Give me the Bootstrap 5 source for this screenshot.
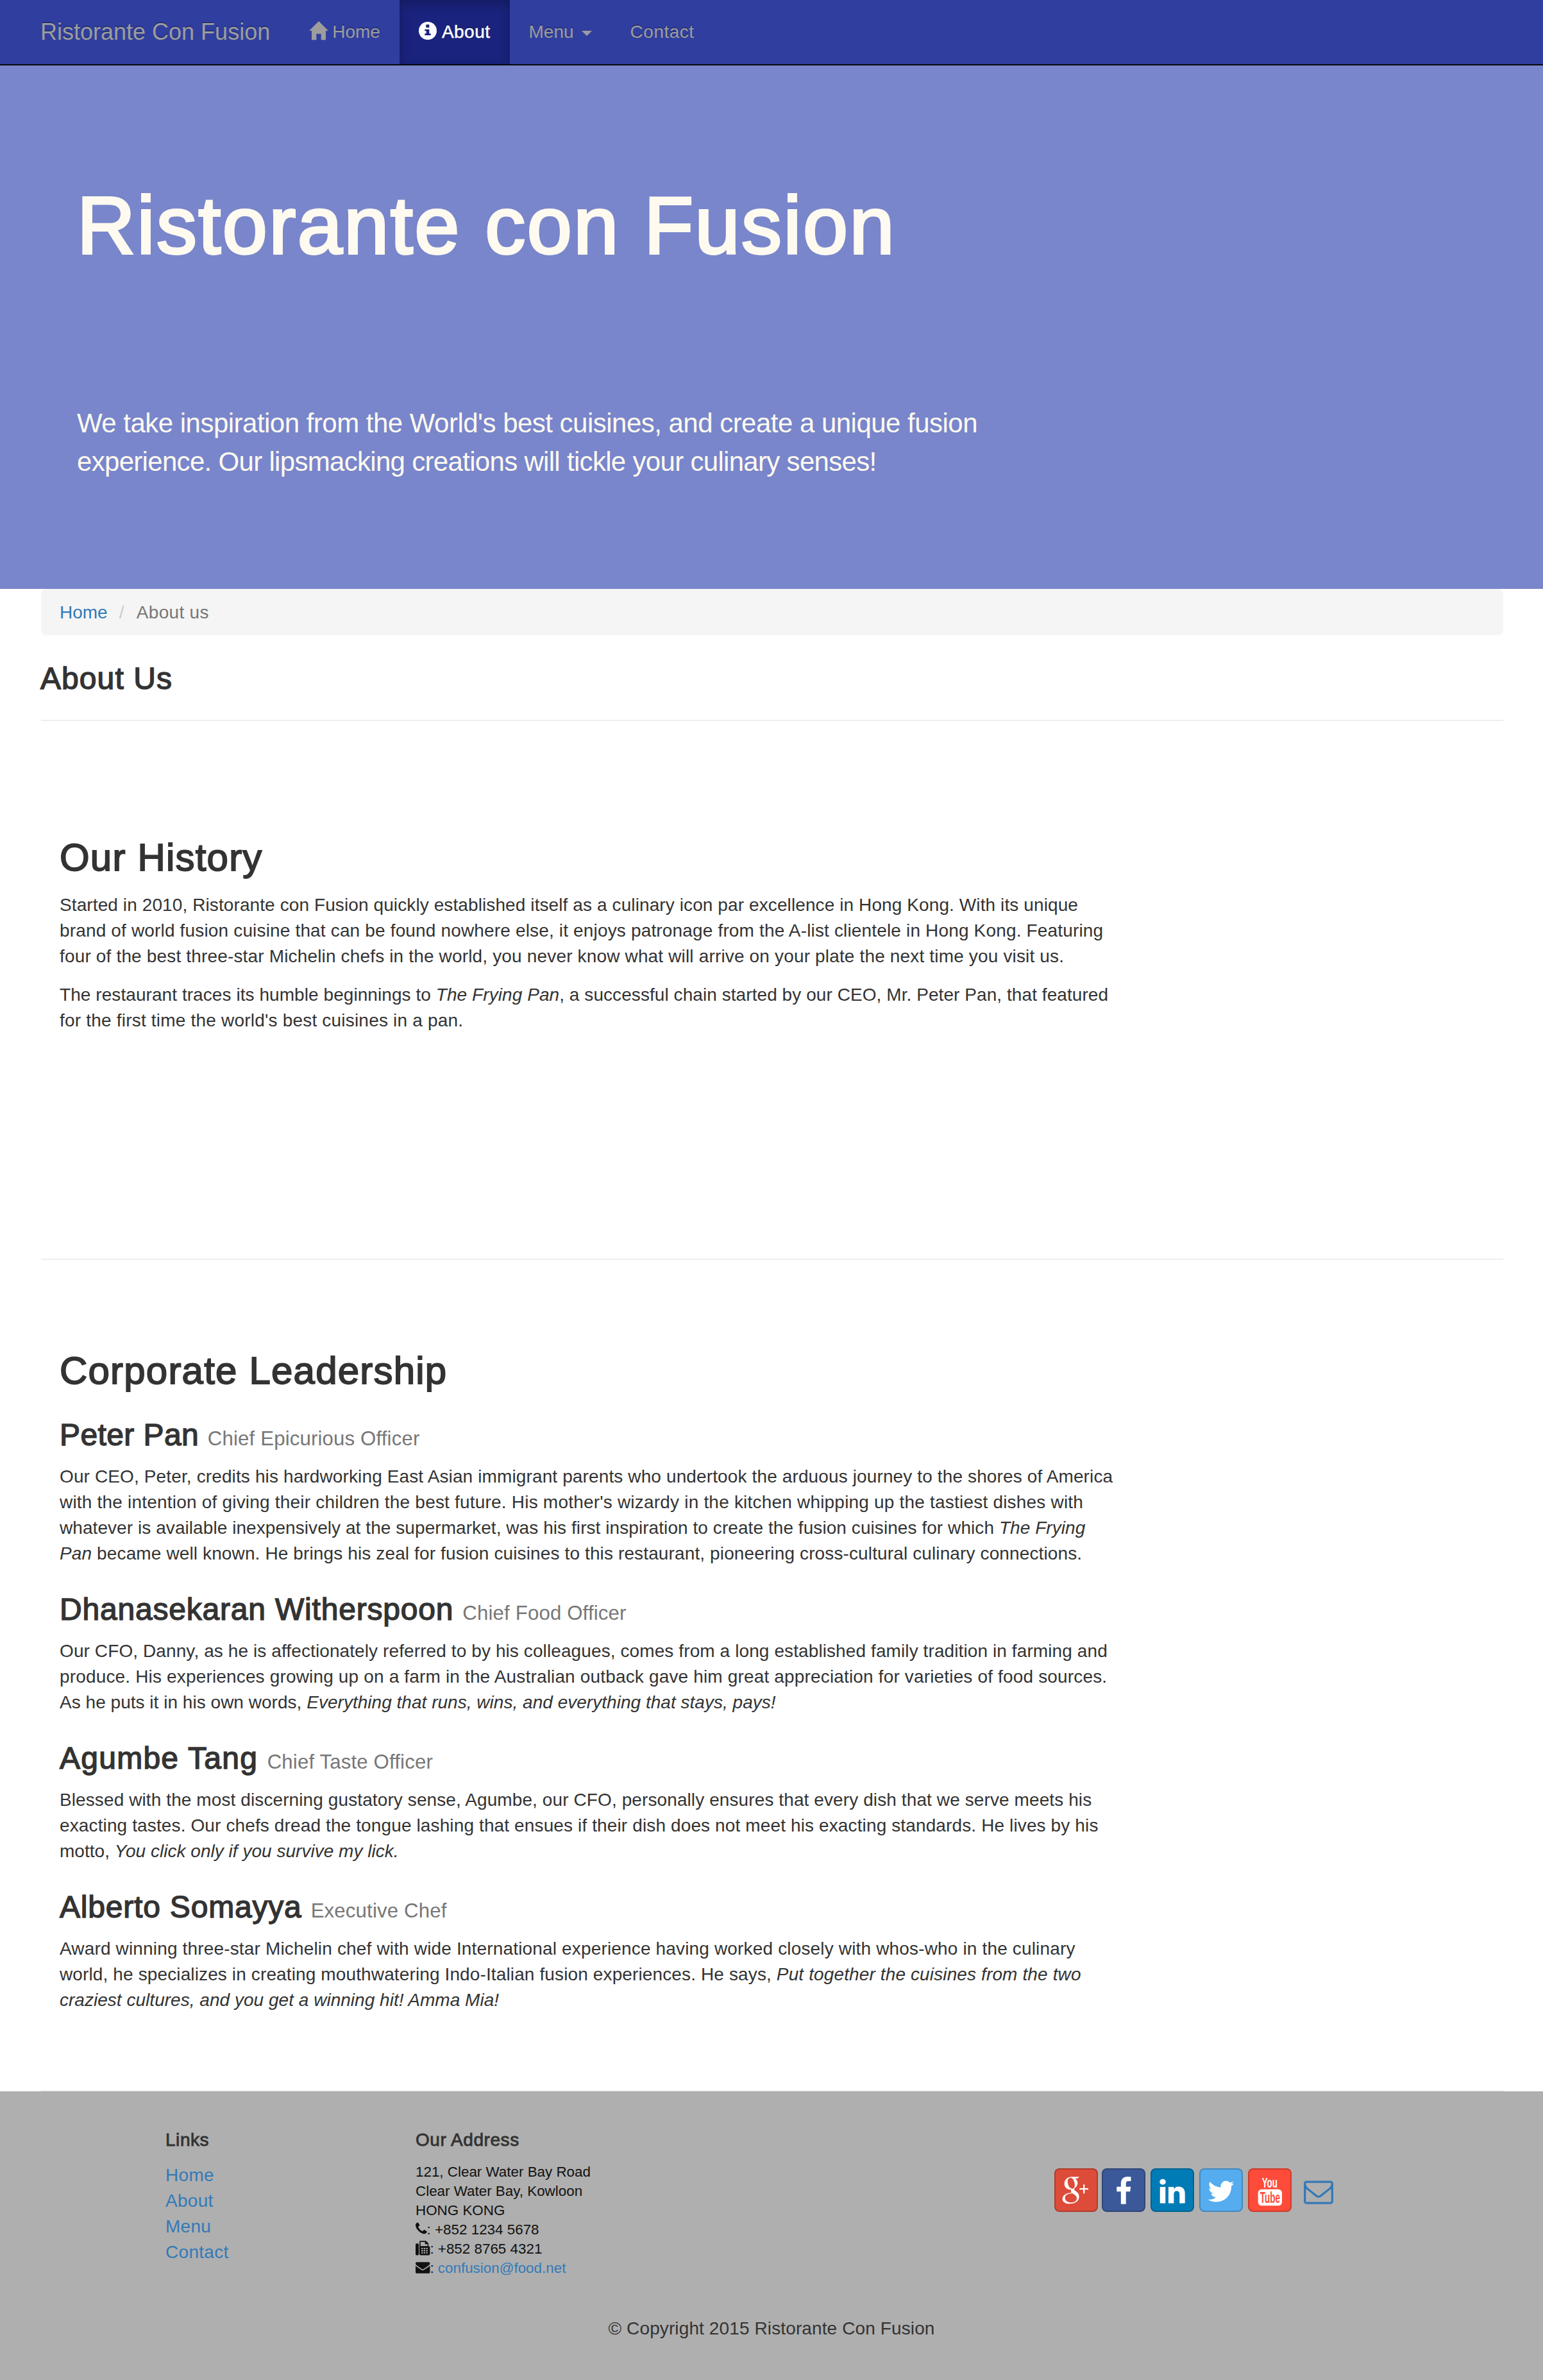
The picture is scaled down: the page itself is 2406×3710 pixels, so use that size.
<!DOCTYPE html>
<html lang="en">
<head>
<meta charset="utf-8">
<meta name="viewport" content="width=device-width, initial-scale=1">
<title>Ristorante Con Fusion: About Us</title>
<link href="https://cdn.jsdelivr.net/npm/bootstrap@5.3.0/dist/css/bootstrap.min.css" rel="stylesheet">
<style>
  body { font-family: "Liberation Sans", Arial, sans-serif; font-size: 28px; line-height: 40px; color: #333; background: #fff; }
  a { color: #337ab7; text-decoration: none; }
  p { margin: 0 0 20px; }
  h1, h2, h3, h5 { font-weight: 400; line-height: 1.1; margin: 40px 0 20px; -webkit-text-stroke: .03em currentColor; }
  h2 { font-size: 60px; letter-spacing: 1.2px; }
  h3 { font-size: 48px; line-height: 52px; letter-spacing: .8px; margin: 41px 0 19px; }
  h3.snug { letter-spacing: .4px; }
  h3.loose { letter-spacing: 1.25px; }
  h5 { font-size: 28px; letter-spacing: .55px; margin: 0 0 19px; }
  h3 small { font-size: 31.2px; line-height: 1; color: #777; letter-spacing: .15px; -webkit-text-stroke: 0; }
  .site-wrap { padding-left: 63px; padding-right: 63px; }

  .site-nav { background: #303f9f; border-bottom: 2px solid #080808; height: 102px; }
  .site-nav .navbar-brand { font-size: 36px; line-height: 40px; padding: 30px 31px 30px 0; margin: 0; color: #9d9d9d; text-shadow: 0 -2px 0 rgba(0,0,0,.25); }
  .site-nav .nav-link { padding: 30px; line-height: 40px; height: 100px; color: #9d9d9d; text-shadow: 0 -2px 0 rgba(0,0,0,.25); }
  .site-nav .nav-link.active { color: #fff; background: #1a237e; box-shadow: inset 0 6px 18px rgba(0,0,0,.25); letter-spacing: .5px; -webkit-text-stroke: .5px #fff; }
  .site-nav .contact-link { letter-spacing: .5px; }
  .nav-ico { width: 28px; height: 28px; margin-right: 8px; overflow: visible; flex: none; }
  .home-ico { width: 30px; height: 30px; margin-right: 6px; margin-top: -4px; }
  .info-ico { margin-top: -4px; }
  .menu-caret { border: 8px solid transparent; border-top-color: #9d9d9d; border-bottom: 0; margin: 4px 0 0 12px; }

  .hero { background: #7986cb; color: floralwhite; height: 816px; padding: 181px 120px 0; }
  .hero h1 { font-size: 126px; margin: 0 0 208px; letter-spacing: 2.45px; white-space: nowrap; }
  .hero p { font-size: 42px; line-height: 60px; letter-spacing: -.52px; margin: 0; }
  .hero .tight { letter-spacing: -.69px; }

  .crumbs { background: #f5f5f5; padding: 17px 29px 15px; margin: 0 -1px 0 1px; border-radius: 8px; height: 72px; }
  .crumbs .breadcrumb-item + .breadcrumb-item { padding-left: 18px; }
  .crumbs .breadcrumb-item + .breadcrumb-item::before { color: #ccc; padding-right: 19px; }
  .crumbs .breadcrumb-item.active { color: #777; letter-spacing: .3px; }
  .page-title { height: 132px; }
  .page-title h3 { margin: 0; padding-top: 42px; letter-spacing: 1.07px; }
  .rule { height: 2px; background: #eee; margin: 0 -1px 0 1px; }

  .block { padding: 100px 29px 0; margin: 0 -1px 0 1px; border-bottom: 2px solid #eee; }
  .history { margin-top: 40px; height: 800px; }
  .history h2 { margin-bottom: 21px; }
  .leaders { height: 1296px; }
  .ln { display: block; white-space: nowrap; }
  .w0 { letter-spacing: .025px; }
  .w1 { letter-spacing: .067px; }
  .w2 { letter-spacing: .1px; }
  .w3 { letter-spacing: .125px; }
  .w4 { letter-spacing: .16px; }
  .w5 { letter-spacing: .2px; }

  .site-foot { background: #afafaf; height: 450px; padding: 61px 33px 0; }
  .foot-cols { height: 289px; margin: 0; }
  .foot-cols > div { padding-left: 30px; padding-right: 0; }
  .foot-links a { letter-spacing: .3px; }
  address { font-size: 22.4px; line-height: 30px; color: #111; margin: 0; }
  address svg { height: 22.4px; display: inline-block; vertical-align: -3px; fill: #111; overflow: visible; }
  .tiles { margin: 59px 0 0 21px; gap: 8px; }
  .tile { width: 68px; height: 68px; border: 2px solid rgba(0,0,0,.2); border-radius: 8px; display: flex; align-items: center; justify-content: center; }
  .tile .fa-ico { width: 46px; height: 46px; fill: #fff; margin-top: 4px; }
  .tile .full { width: 68px; height: 68px; margin: -2px; flex: none; overflow: visible; }
  .gp { background: #dd4b39; margin-right: -2px; }
  .fb { background: #3b5998; } .li { background: #007bb6; } .tw { background: #55acee; } .yt { background: #ff4b39; }
  .mail { margin: 13px 0 0 11px; display: flex; }
  .mail svg { width: 46px; height: 46px; fill: #337ab7; }
  .copy { letter-spacing: .115px; }
</style>
</head>
<body>
<nav class="site-nav">
  <div class="site-wrap d-flex">
    <a class="navbar-brand" href="#">Ristorante Con Fusion</a>
    <ul class="nav flex-nowrap">
      <li class="nav-item"><a class="nav-link d-flex align-items-center" href="#"><svg class="nav-ico home-ico" viewBox="0 0 90 90" fill="#9d9d9d"><path d="M45 0 90 45H78V88H56V59H34V88H12V45H0Z"/></svg>Home</a></li>
      <li class="nav-item"><a class="nav-link active d-flex align-items-center" href="#"><svg class="nav-ico info-ico" viewBox="0 0 84 84"><circle cx="42" cy="42" r="42" fill="#fff"/><path d="M34 13H49V27H34ZM28 35H49V55H56V63H28V55H35V43H28Z" fill="#1a237e"/></svg>About</a></li>
      <li class="nav-item"><a class="nav-link d-flex align-items-center" href="#">Menu<span class="menu-caret"></span></a></li>
      <li class="nav-item"><a class="nav-link contact-link" href="#">Contact</a></li>
    </ul>
  </div>
</nav>

<header class="hero">
  <h1>Ristorante con Fusion</h1>
  <p><span class="ln">We take inspiration from the World's best cuisines, and create a unique fusion</span> <span class="ln tight">experience. Our lipsmacking creations will tickle your culinary senses!</span></p>
</header>

<main class="site-wrap">
  <ol class="breadcrumb crumbs">
    <li class="breadcrumb-item"><a href="#">Home</a></li>
    <li class="breadcrumb-item active">About us</li>
  </ol>
  <div class="page-title"><h3>About Us</h3></div>
  <div class="rule"></div>

  <section class="block history">
    <h2>Our History</h2>
    <p><span class="ln w2">Started in 2010, Ristorante con Fusion quickly established itself as a culinary icon par excellence in Hong Kong. With its unique</span>
    <span class="ln w4">brand of world fusion cuisine that can be found nowhere else, it enjoys patronage from the A-list clientele in Hong Kong. Featuring</span>
    <span class="ln w4">four of the best three-star Michelin chefs in the world, you never know what will arrive on your plate the next time you visit us.</span></p>
    <p><span class="ln w1">The restaurant traces its humble beginnings to <em>The Frying Pan</em>, a successful chain started by our CEO, Mr. Peter Pan, that featured</span>
    <span class="ln w5">for the first time the world's best cuisines in a pan.</span></p>
  </section>

  <section class="block leaders">
    <h2>Corporate Leadership</h2>
    <h3 class="snug">Peter Pan <small>Chief Epicurious Officer</small></h3>
    <p><span class="ln w3">Our CEO, Peter, credits his hardworking East Asian immigrant parents who undertook the arduous journey to the shores of America</span>
    <span class="ln w5">with the intention of giving their children the best future. His mother's wizardy in the kitchen whipping up the tastiest dishes with</span>
    <span class="ln w1">whatever is available inexpensively at the supermarket, was his first inspiration to create the fusion cuisines for which <em>The Frying</em></span>
    <span class="ln w3"><em>Pan</em> became well known. He brings his zeal for fusion cuisines to this restaurant, pioneering cross-cultural culinary connections.</span></p>
    <h3>Dhanasekaran Witherspoon <small>Chief Food Officer</small></h3>
    <p><span class="ln w2">Our CFO, Danny, as he is affectionately referred to by his colleagues, comes from a long established family tradition in farming and</span>
    <span class="ln w4">produce. His experiences growing up on a farm in the Australian outback gave him great appreciation for varieties of food sources.</span>
    <span class="ln w0">As he puts it in his own words, <em>Everything that runs, wins, and everything that stays, pays!</em></span></p>
    <h3 class="loose">Agumbe Tang <small>Chief Taste Officer</small></h3>
    <p><span class="ln w2">Blessed with the most discerning gustatory sense, Agumbe, our CFO, personally ensures that every dish that we serve meets his</span>
    <span class="ln w3">exacting tastes. Our chefs dread the tongue lashing that ensues if their dish does not meet his exacting standards. He lives by his</span>
    <span class="ln w0">motto, <em>You click only if you survive my lick.</em></span></p>
    <h3>Alberto Somayya <small>Executive Chef</small></h3>
    <p><span class="ln w4">Award winning three-star Michelin chef with wide International experience having worked closely with whos-who in the culinary</span>
    <span class="ln w3">world, he specializes in creating mouthwatering Indo-Italian fusion experiences. He says, <em>Put together the cuisines from the two</em></span>
    <span class="ln w0"><em>craziest cultures, and you get a winning hit! Amma Mia!</em></span></p>
  </section>
</main>

<footer class="site-foot">
  <div class="row foot-cols">
    <div class="col-2 offset-1">
      <h5>Links</h5>
      <ul class="list-unstyled foot-links m-0">
        <li><a href="#">Home</a></li>
        <li><a href="#">About</a></li>
        <li><a href="#">Menu</a></li>
        <li><a href="#">Contact</a></li>
      </ul>
    </div>
    <div class="col-5">
      <h5>Our Address</h5>
      <address>
        121, Clear Water Bay Road<br>Clear Water Bay, Kowloon<br>HONG KONG<br>
        <svg viewBox="192 0 1408 1792" width="17.6"><path d="M1600 1240q0 27-10 70.500t-21 68.500q-21 50-122 106-94 51-186 51-27 0-53-3.500t-57.500-12.500-47-14.500-55.500-20.500-49-18q-98-35-175-83-127-79-264-216t-216-264q-48-77-83-175-3-9-18-49t-20.500-55.500-14.500-47-12.500-57.500-3.500-53q0-92 51-186 56-101 106-122 25-11 68.500-21t70.500-10q14 0 21 3 18 6 53 76 11 19 30 54t35 63.500 31 53.500q3 4 17.500 25t21.500 35.500 7 28.500q0 20-28.500 50t-62 55-62 53-28.500 46q0 9 5 22.500t8.500 20.500 14 24 11.500 19q76 137 174 235t235 174q2 1 19 11.500t24 14 20.500 8.500 22.500 5q18 0 46-28.500t53-62 55-62 50-28.500q14 0 28.500 7t35.500 21.500 25 17.500q25 15 53.500 31t63.500 35 54 30q70 35 76 53 3 7 3 21z"/></svg>: +852 1234 5678<br>
        <svg viewBox="0 0 67 67" width="22.4"><path fill-rule="evenodd" d="M4 13H11Q15 13 15 18V62Q15 67 11 67H4Q0 67 0 62V18Q0 13 4 13ZM23 0H48L60 12V24Q67 26 67 31V61Q67 67 61 67H24Q18 67 18 61V5Q18 0 23 0ZM23 5V25H56V16H44V5ZM27 33V39H34V33ZM38 33V39H45V33ZM49 33V39H56V33ZM27 43V49H34V43ZM38 43V49H45V43ZM49 43V49H56V43ZM27 53V59H34V53ZM38 53V59H45V53ZM49 53V59H56V53Z"/></svg>: +852 8765 4321<br>
        <svg viewBox="0 0 1792 1792" width="22.4"><path d="M1792 710v794q0 66-47 113t-113 47h-1472q-66 0-113-47t-47-113v-794q44 49 101 87 362 246 497 345 57 42 92.500 65.500t94.500 48 110 24.500h2q51 0 110-24.500t94.500-48 92.500-65.500q170-123 498-345 57-39 100-87zm0-294q0 79-49 151t-122 123q-376 261-468 325-10 7-42.500 31t-54 38.500-52 32.500-57.500 27-50 9h-2q-23 0-50-9t-57.500-27-52-32.500-54-38.500-42.500-31q-91-64-262-182.500t-205-142.500q-62-42-117-115.500t-55-136.500q0-78 41.500-130t118.500-52h1472q65 0 112.500 47t47.500 113z"/></svg>: <a href="#">confusion@food.net</a>
      </address>
    </div>
    <div class="col-4">
      <div class="tiles d-flex">
        <a class="tile gp" href="#"><svg class="full" viewBox="0 0 204 204" fill="#fff"><path fill-rule="evenodd" d="M118 40 108 47H97Q109 55 109 69C109 82 101 88 95 93Q90 98 97 104C108 112 116 118 116 133C116 153 98 166 72 166C52 166 38 157 38 143C38 126 56 115 81 114Q75 108 79 100C60 101 47 89 47 72C47 54 61 40 83 40ZM75 45C63 46 60 58 64 73C68 88 76 96 86 95C96 93 98 80 94 66C90 52 84 44 75 45ZM83 118C64 118 50 125 50 139C50 152 62 160 79 160C96 160 105 152 105 141C105 129 96 125 86 118Z"/><path d="M135 76H142V93H159V100H142V118H135V100H118V93H135Z"/></svg></a>
        <a class="tile fb" href="#"><svg class="fa-ico" viewBox="0 0 1792 1792"><path d="M1343 12v264h-157q-86 0-116 36t-30 108v189h293l-39 296h-254v759h-306v-759h-255v-296h255v-218q0-186 104-288.500t277-102.500q147 0 228 12z"/></svg></a>
        <a class="tile li" href="#"><svg class="fa-ico" viewBox="0 0 1792 1792"><path d="M477 625v991h-330v-991h330zm21-306q1 73-50.500 122t-135.500 49h-2q-82 0-132-49t-50-122q0-74 51.500-122.500t134.500-48.500 133 48.500 51 122.500zm1166 729v568h-329v-530q0-105-40.500-164.500t-126.500-59.500q-63 0-105.500 34.500t-63.500 85.500q-11 30-11 81v553h-329q2-399 2-647t-1-296l-1-48h329v144h-2q20-32 41-56t56.500-52 87-43.500 114.500-15.500q171 0 275 113.500t104 332.500z"/></svg></a>
        <a class="tile tw" href="#"><svg class="fa-ico" viewBox="0 0 1792 1792"><path d="M1684 408q-67 98-162 167 1 14 1 42 0 130-38 259.500t-115.500 248.500-184.500 210.500-258 146-323 54.500q-271 0-496-145 35 4 78 4 225 0 401-138-105-2-188-64.500t-114-159.500q33 5 61 5 43 0 85-11-112-23-185.500-111.500t-73.500-205.500v-4q68 38 146 41-66-44-105-115t-39-154q0-88 44-163 121 149 294.500 238.500t371.500 99.500q-8-38-8-74 0-134 94.500-228.500t228.500-94.500q140 0 236 102 109-21 205-78-37 115-142 178 93-10 186-50z"/></svg></a>
        <a class="tile yt" href="#"><svg class="full" viewBox="0 0 204 204" font-family="Liberation Sans, Arial, sans-serif" font-weight="700"><rect x="47" y="98" width="112" height="77" rx="17" fill="#fff"/><text x="65" y="91" font-size="68" textLength="73" lengthAdjust="spacingAndGlyphs" fill="#fff">You</text><text x="56" y="162" font-size="70" textLength="94" lengthAdjust="spacingAndGlyphs" fill="#ff4b39">Tube</text></svg></a>
        <a class="mail" href="#"><svg viewBox="0 0 1792 1792"><path d="M1664 1504v-768q-32 36-69 66-268 206-426 338-51 43-83 67t-86.500 48.500-102.500 24.500h-2q-48 0-102.500-24.500t-86.500-48.500-83-67q-158-132-426-338-37-30-69-66v768q0 13 9.500 22.500t22.500 9.500h1472q13 0 22.500-9.500t9.500-22.500zm0-1051v-24.500l-.5-13-3-12.500-5.500-9-9-7.500-14-2.500h-1472q-13 0-22.500 9.500t-9.500 22.500q0 168 147 284 193 152 401 317 6 5 35 29.500t46 37.500 44.500 31.500 50.500 27.500 43 9h2q20 0 43-9t50.500-27.500 44.500-31.500 46-37.500 35-29.500q208-165 401-317 54-43 100.500-115.500t46.500-131.500zm128-37v1088q0 66-47 113t-113 47h-1472q-66 0-113-47t-47-113v-1088q0-66 47-113t113-47h1472q66 0 113 47t47 113z"/></svg></a>
      </div>
    </div>
  </div>
  <p class="copy text-center m-0">© Copyright 2015 Ristorante Con Fusion</p>
</footer>
<script src="https://cdn.jsdelivr.net/npm/bootstrap@5.3.0/dist/js/bootstrap.bundle.min.js"></script>
</body>
</html>
